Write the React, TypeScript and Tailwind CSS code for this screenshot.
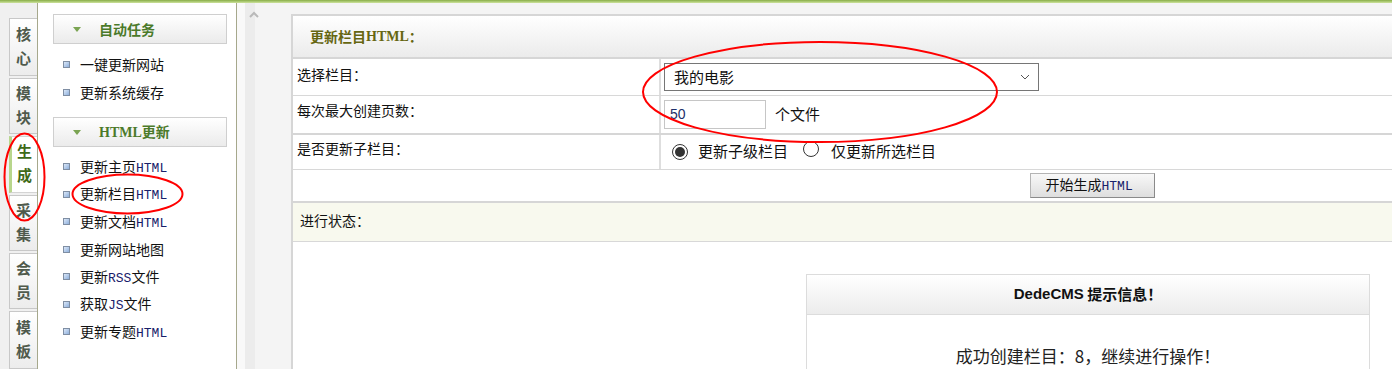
const cjk = "font-['Noto_Sans_CJK_SC',sans-serif]";

function Latin({ children }: { children: string }) {
  return <span className="font-['Liberation_Mono',monospace] text-[13px] text-[#18206a]">{children}</span>;
}

const tabs = [
  { label: ["核", "心"], h: "h-[58px]" },
  { label: ["模", "块"], h: "h-[56px]" },
  { label: ["生", "成"], h: "h-[57px]", active: true },
  { label: ["采", "集"], h: "h-[56px]" },
  { label: ["会", "员"], h: "h-[56px]" },
  { label: ["模", "板"], h: "h-[58px]" },
];

const htmlItems: [string, string, string][] = [
  ["更新主页", "HTML", ""],
  ["更新栏目", "HTML", ""],
  ["更新文档", "HTML", ""],
  ["更新网站地图", "", ""],
  ["更新", "RSS", "文件"],
  ["获取", "JS", "文件"],
  ["更新专题", "HTML", ""],
];

function Bullet() {
  return <span className="inline-block w-[7px] h-[7px] border border-[#7f8ea3] bg-gradient-to-br from-[#dce8f8] to-[#8fb0dc] mr-[10px]" />;
}

function MenuItem({ children }: { children: React.ReactNode }) {
  return (
    <div className="flex items-center h-[27.5px] pl-[10px] text-[14px] text-[#111]">
      <Bullet />
      <span>{children}</span>
    </div>
  );
}

function SideHeader({ title }: { title: React.ReactNode }) {
  return (
    <div className="flex items-center h-[30px] w-[174px] border border-[#cfcfcf] bg-gradient-to-b from-white to-[#ebebeb]">
      <svg width="8" height="5" viewBox="0 0 8 5" className="ml-[19px] mr-[18px]">
        <path d="M0 0 L8 0 L4 5 Z" fill="#7aa452" />
      </svg>
      <span className="text-[14px] font-bold text-[#4b7a2a]">{title}</span>
    </div>
  );
}

function Radio({ checked }: { checked?: boolean }) {
  return (
    <span className="inline-flex items-center justify-center w-[16px] h-[16px] rounded-full border border-[#333] bg-white">
      {checked && <span className="w-[10px] h-[10px] rounded-full bg-[#333]" />}
    </span>
  );
}

export default function App() {
  return (
    <div className={`relative w-[1392px] h-[369px] overflow-hidden bg-white ${cjk}`}>
      {/* top strip */}
      <div className="h-[3px] bg-gradient-to-b from-[#88ad46] to-[#cde39c]" />

      <div className="flex h-[366px]">
        {/* tabs */}
        <div className="w-[38px] shrink-0 bg-[#f0f0f0] border-r border-[#a6a88c] pl-[9px] pt-[15px] flex flex-col gap-[2px]">
          {tabs.map((t, i) => (
            <div
              key={i}
              className={`${t.h} w-[28px] flex flex-col items-center justify-center pb-[3px] text-[15px] font-bold leading-[24px] border-y border-l ${
                t.active
                  ? "bg-white border-[#d4d4d4] border-l-[3px] border-l-[#b8d68c] text-[#3e6a18]"
                  : "bg-gradient-to-b from-white to-[#ececec] border-[#c8c8c8] text-[#4f5a4c]"
              }`}
            >
              <span>{t.label[0]}</span>
              <span>{t.label[1]}</span>
            </div>
          ))}
        </div>

        {/* sidebar */}
        <div className="w-[199px] shrink-0 border-r border-[#a6a88c] pl-[15px] pt-[11px]">
          <SideHeader title="自动任务" />
          <div className="mt-[7px]">
            <MenuItem>一键更新网站</MenuItem>
            <MenuItem>更新系统缓存</MenuItem>
          </div>
          <div className="mt-[11px]">
            <SideHeader
              title={
                <>
                  <span className="font-['Liberation_Serif',serif]">HTML</span>更新
                </>
              }
            />
          </div>
          <div className="mt-[6px]">
            {htmlItems.map(([a, b, c], i) => (
              <MenuItem key={i}>
                {a}
                {b && <Latin>{b}</Latin>}
                {c}
              </MenuItem>
            ))}
          </div>
        </div>

        {/* gutter */}
        <div className="w-[8px] shrink-0 bg-[#f9f9f9]" />
        <div className="w-[10px] shrink-0 bg-[#ececec] relative">
          <svg width="10" height="7" viewBox="0 0 10 7" className="absolute left-[4px] top-[8px]">
            <path d="M1 6 L5 2 L9 6" fill="none" stroke="#b9b9b9" strokeWidth="2" />
          </svg>
        </div>
        <div className="w-[36px] shrink-0 bg-[#f4f4f4]" />

        {/* main panel */}
        <div className="w-[1600px] shrink-0 pt-[11px] bg-[#f4f4f4]">
          <div className="h-full bg-white border-l-2 border-t-2 border-[#d6d6d6] text-[14px] text-[#111]">
            <div className="h-[43px] flex items-center pl-[17px] border-b-2 border-[#d6d6d6] bg-gradient-to-b from-white to-[#ebebeb] font-bold text-[#666611]">
              更新栏目<span className="font-['Liberation_Serif',serif]">HTML</span>：
            </div>

            <div className="h-[37px] flex border-b border-[#d8d8d8]">
              <div className="w-[368px] pl-[4px] pb-[6px] flex items-center border-r-2 border-[#dedede]">选择栏目：</div>
              <div className="flex items-center pl-[3px] text-[15px]">
                <div className="w-[375px] h-[28px] border border-[#767676] flex items-center justify-between pl-[9px] pr-[8px]">
                  <span>我的电影</span>
                  <svg width="10" height="6" viewBox="0 0 10 6">
                    <path d="M1 1 L5 5 L9 1" fill="none" stroke="#555" strokeWidth="1" />
                  </svg>
                </div>
              </div>
            </div>

            <div className="h-[39px] flex border-b-2 border-[#d6d6d6]">
              <div className="w-[368px] pl-[4px] pb-[8px] flex items-center border-r-2 border-[#dedede]">每次最大创建页数：</div>
              <div className="flex items-center pl-[3px] text-[15px]">
                <div className="w-[102px] h-[29px] border border-[#c6c6c6] flex items-center pl-[5px] text-[#1d2f6a] font-['Liberation_Sans',sans-serif] text-[14px]">
                  50
                </div>
                <span className="ml-[9px]">个文件</span>
              </div>
            </div>

            <div className="h-[35px] flex border-b border-[#d8d8d8]">
              <div className="w-[368px] pl-[4px] pb-[8px] flex items-center border-r-2 border-[#dedede]">是否更新子栏目：</div>
              <div className="flex items-center pl-[11px] pb-[1px] text-[15px]">
                <Radio checked />
                <span className="ml-[10px]">更新子级栏目</span>
                <span className="ml-[15px]">
                  <Radio />
                </span>
                <span className="ml-[12px]">仅更新所选栏目</span>
              </div>
            </div>

            <div className="h-[33px] flex items-center justify-center border-b-2 border-[#d6d6d6]">
              <button className="w-[125px] h-[25px] border border-[#b4b4b4] border-r-[#8a8a8a] border-b-[#8a8a8a] bg-gradient-to-b from-[#f8f8f8] to-[#dedede] text-left pl-[15px] text-[14px]">
                开始生成<Latin>HTML</Latin>
              </button>
            </div>

            <div className="h-[39px] flex items-center pl-[7px] pb-[4px] bg-[#f8f9ee] border-b border-[#d8d8d8]">进行状态：</div>

            <div className="flex justify-center pt-[32px] pr-[8px]">
              <div className="w-[564px] h-[200px] border border-[#dcdcdc]">
                <div className="h-[40px] flex items-center justify-center border-b border-[#dcdcdc] bg-gradient-to-b from-white to-[#ececec] font-bold text-[15px] text-[#111]">
                  <span className="font-['Liberation_Sans',sans-serif]">DedeCMS</span>&nbsp;提示信息！
                </div>
                <div className="pt-[28px] text-center text-[17px] text-[#222]">成功创建栏目：8，继续进行操作！</div>
              </div>
            </div>
          </div>
        </div>
      </div>

      {/* red annotation marks */}
      <svg className="absolute inset-0 pointer-events-none" width="1392" height="369">
        <ellipse cx="24.5" cy="177" rx="20" ry="43.5" fill="none" stroke="#f00" strokeWidth="2" />
        <ellipse cx="127.5" cy="194" rx="55" ry="19.5" fill="none" stroke="#f00" strokeWidth="2" />
        <ellipse cx="820" cy="92" rx="177" ry="50" fill="none" stroke="#f00" strokeWidth="2" />
      </svg>
    </div>
  );
}
